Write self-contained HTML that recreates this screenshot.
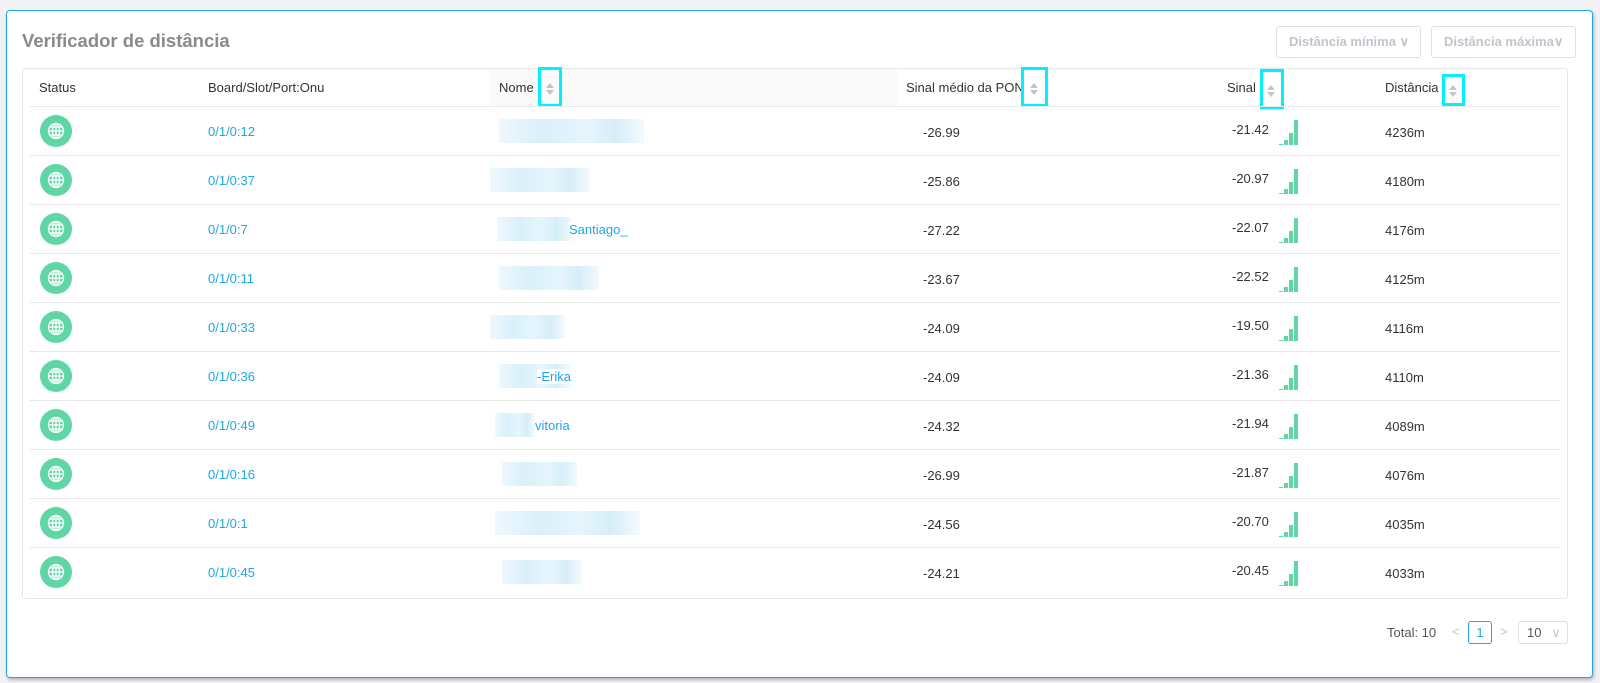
<!DOCTYPE html>
<html><head><meta charset="utf-8"><style>
*{box-sizing:border-box;margin:0;padding:0}
body{width:1600px;height:683px;background:#f0f2f5;font-family:"Liberation Sans",sans-serif;position:relative;overflow:hidden;color:#333}
.card{position:absolute;left:6px;top:10px;width:1587px;height:668px;background:#fff;border:1px solid #1ea7e1;border-radius:4px;box-shadow:1px 2px 3px rgba(0,0,0,.25)}
.abs{position:absolute}
.title{left:22px;top:30px;font-size:18.5px;font-weight:bold;color:#8a8a8a}
.dd{height:32px;top:26px;border:1px solid #dcdfe6;border-radius:3px;color:#c0c4cc;font-weight:bold;font-size:13px;line-height:30px;padding-left:12px}
.tbl{left:22px;top:68px;width:1546px;height:531px;border:1px solid #e6e6e6;border-radius:3px}
.hd{font-size:13px;color:#333;top:80px}
.line{position:absolute;left:30px;width:1530px;height:1px;background:#e8e8e8}
.cell{position:absolute;font-size:13px}
.link{color:#1ea7e1}
.circ{position:absolute;left:40px;width:32px;height:32px;border-radius:50%;background:#5fd6a4}
.cyan{position:absolute;border:3px solid #00f0ff}
.sort{position:absolute;width:0;height:0;border-left:4px solid transparent;border-right:4px solid transparent}
.blur{position:absolute;background:linear-gradient(90deg,#eef8fd,#d9f0fa 30%,#e6f5fc 60%,#d6eef9 80%,#f3fafe)}
.bar{position:absolute;background:#5fd6a4;width:4px}
</style></head><body>
<div class="card"></div>
<div class="abs title">Verificador de distância</div>
<div class="abs dd" style="left:1276px;width:145px">Distância mínima ∨</div>
<div class="abs dd" style="left:1431px;width:145px">Distância máxima∨</div>
<div class="abs tbl"></div>
<div class="abs" style="left:490px;top:69px;width:408px;height:38px;background:#fafafa"></div>
<div class="abs hd" style="left:39px">Status</div>
<div class="abs hd" style="left:208px">Board/Slot/Port:Onu</div>
<div class="abs hd" style="left:499px">Nome</div>
<div class="abs hd" style="left:906px">Sinal médio da PON</div>
<div class="abs hd" style="left:1227px">Sinal</div>
<div class="abs hd" style="left:1385px">Distância</div>
<div class="cyan" style="left:538px;top:67px;width:24px;height:40px"></div>
<div class="cyan" style="left:1021px;top:67px;width:27px;height:40px"></div>
<div class="cyan" style="left:1260px;top:69px;width:24px;height:40px"></div>
<div class="cyan" style="left:1442px;top:74px;width:23px;height:32px"></div>
<div class="sort" style="left:546px;top:83px;border-bottom:5px solid #c0c4cc"></div><div class="sort" style="left:546px;top:90px;border-top:5px solid #c0c4cc"></div>
<div class="sort" style="left:1030px;top:83px;border-bottom:5px solid #c0c4cc"></div><div class="sort" style="left:1030px;top:90px;border-top:5px solid #c0c4cc"></div>
<div class="sort" style="left:1267px;top:85px;border-bottom:5px solid #c0c4cc"></div><div class="sort" style="left:1267px;top:92px;border-top:5px solid #c0c4cc"></div>
<div class="sort" style="left:1449px;top:85px;border-bottom:5px solid #c0c4cc"></div><div class="sort" style="left:1449px;top:92px;border-top:5px solid #c0c4cc"></div>
<div class="line" style="top:106px"></div>

<div id="rows"></div>
<script>
var d=[["0/1/0:12","-26.99","-21.42","4236m",""],["0/1/0:37","-25.86","-20.97","4180m",""],["0/1/0:7","-27.22","-22.07","4176m","Santiago_"],["0/1/0:11","-23.67","-22.52","4125m",""],["0/1/0:33","-24.09","-19.50","4116m",""],["0/1/0:36","-24.09","-21.36","4110m","-Erika"],["0/1/0:49","-24.32","-21.94","4089m","vitoria"],["0/1/0:16","-26.99","-21.87","4076m",""],["0/1/0:1","-24.56","-20.70","4035m",""],["0/1/0:45","-24.21","-20.45","4033m",""]];
var bw=[145,100,75,100,75,72,40,75,145,80],bx=[499,490,497,499,490,499,495,502,495,502];
var h="";
d.forEach(function(r,i){var y=107+i*49;
h+='<div class="circ" style="top:'+(y+8)+'px"><svg width="32" height="32" viewBox="0 0 32 32" fill="none" stroke="#fff" stroke-width="1.3"><circle cx="16" cy="16" r="7.5"/><ellipse cx="16" cy="16" rx="3.5" ry="7.5"/><line x1="16" y1="8.5" x2="16" y2="23.5"/><line x1="8.5" y1="16" x2="23.5" y2="16"/><line x1="9.5" y1="12" x2="22.5" y2="12"/><line x1="9.5" y1="20" x2="22.5" y2="20"/></svg></div>';
h+='<div class="cell link" style="left:208px;top:'+(y+17)+'px">'+r[0]+'</div>';
h+='<div class="blur" style="left:'+bx[i]+'px;top:'+(y+12)+'px;width:'+bw[i]+'px;height:24px"></div>';
if(r[4])h+='<div class="cell link" style="left:'+(bx[i]+(i==2?72:i==5?38:40))+'px;top:'+(y+17)+'px;background:#fff">'+r[4]+'</div>';
h+='<div class="cell" style="left:923px;top:'+(y+18)+'px">'+r[1]+'</div>';
h+='<div class="cell" style="left:1232px;top:'+(y+15)+'px">'+r[2]+'</div>';
h+='<div class="bar" style="left:1279px;top:'+(y+37)+'px;height:1px"></div><div class="bar" style="left:1284px;top:'+(y+33)+'px;height:5px"></div><div class="bar" style="left:1289px;top:'+(y+26)+'px;height:12px"></div><div class="bar" style="left:1294px;top:'+(y+13)+'px;height:25px"></div>';
h+='<div class="cell" style="left:1385px;top:'+(y+18)+'px">'+r[3]+'</div>';
if(i<9)h+='<div class="line" style="top:'+(y+48)+'px"></div>';
});
document.getElementById("rows").innerHTML=h;
</script>
<div class="cell" style="left:1387px;top:625px;color:#555">Total: 10</div>
<div class="cell" style="left:1452px;top:624px;color:#c0c4cc">&lt;</div>
<div class="abs" style="left:1468px;top:621px;width:24px;height:23px;border:1px solid #1ea7e1;border-radius:3px;color:#1ea7e1;font-size:13px;text-align:center;line-height:21px">1</div>
<div class="cell" style="left:1500px;top:624px;color:#c0c4cc">&gt;</div>
<div class="abs" style="left:1518px;top:621px;width:50px;height:23px;border:1px solid #dcdfe6;border-radius:3px;color:#555;font-size:13px;line-height:21px;padding-left:8px">10 <span style="color:#c0c4cc;margin-left:6px">∨</span></div>
</body></html>
